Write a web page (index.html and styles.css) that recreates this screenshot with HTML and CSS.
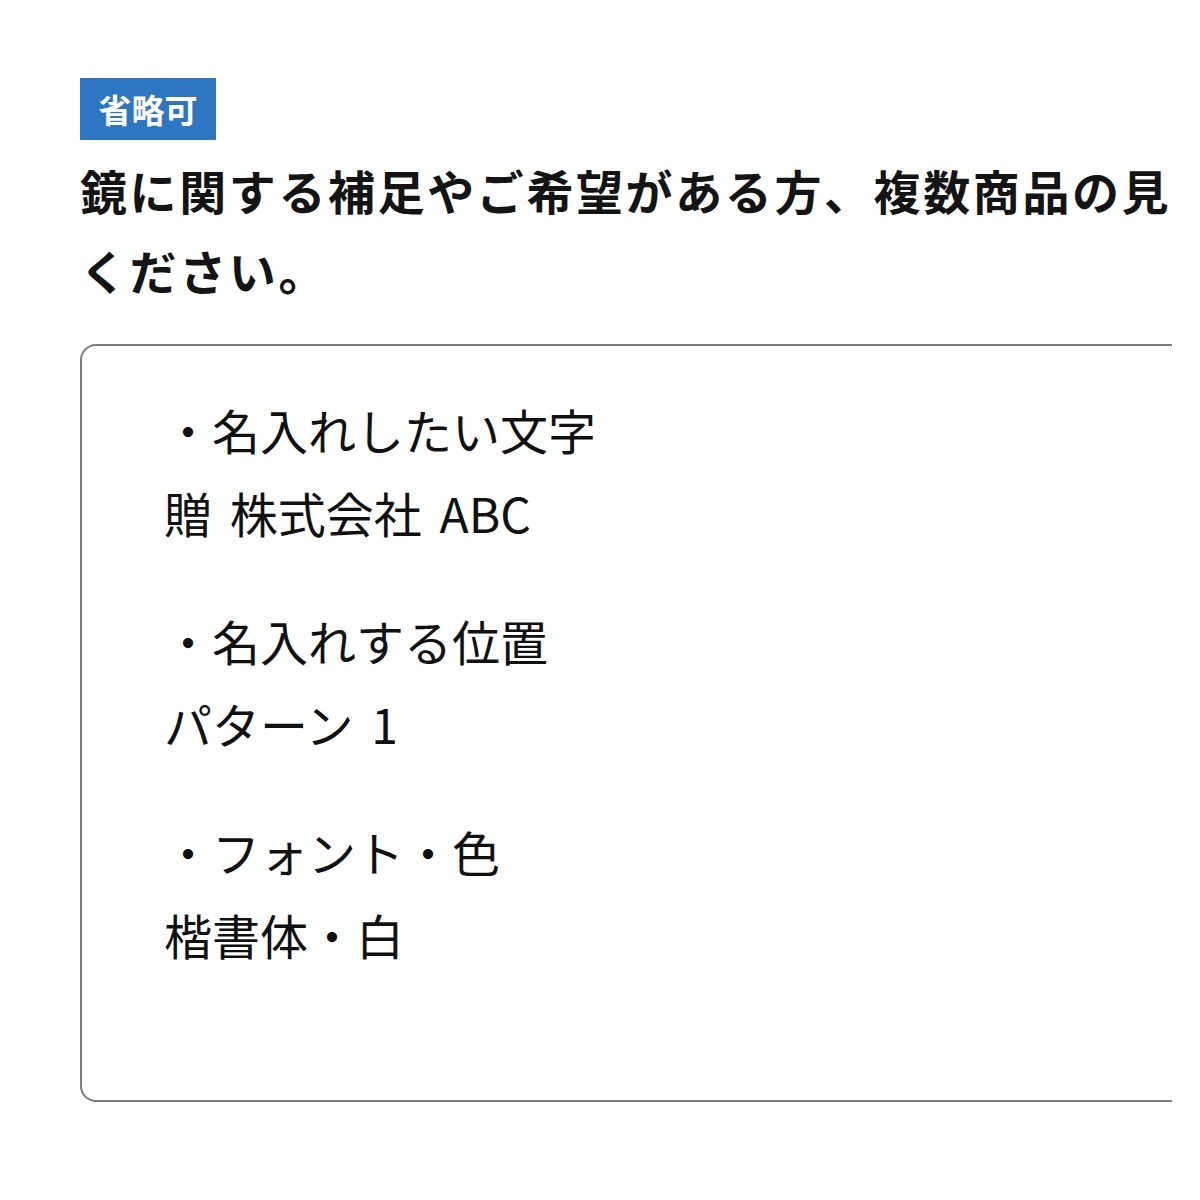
FILE: index.html
```html
<!DOCTYPE html>
<html lang="ja">
<head>
<meta charset="utf-8">
<link rel="stylesheet" href="styles.css">
</head>
<body>
<div class="page">
  <div class="clip">
    <span class="badge">省略可</span>
    <p class="label">鏡に関する補足やご希望がある方、複数商品の見積もりをご希望の方はご記入<br>ください。</p>
    <div class="field">
      <div class="para">
        <div class="line">・名入れしたい文字</div>
        <div class="line">贈 株式会社 ABC</div>
      </div>
      <div class="para">
        <div class="line">・名入れする位置</div>
        <div class="line">パターン 1</div>
      </div>
      <div class="para">
        <div class="line">・フォント・色</div>
        <div class="line">楷書体・白</div>
      </div>
    </div>
  </div>
</div>
</body>
</html>
```
FILE: styles.css
```css
html, body {
  margin: 0;
  padding: 0;
  background: #ffffff;
}
.page {
  padding: 78px 0 0 80px;
  font-family: "Noto Sans CJK JP", "Noto Sans", sans-serif;
  color: #111111;
}
.clip {
  width: 1092px;
  overflow: hidden;
}
.badge {
  display: inline-flex;
  align-items: center;
  justify-content: center;
  width: 136px;
  height: 62px;
  background: #2f76c2;
  color: #ffffff;
  font-weight: 700;
  font-size: 33px;
  line-height: 1;
  letter-spacing: 0;
}
.label {
  margin: 10px 0 0 0;
  width: 2000px;
  font-size: 47px;
  font-weight: 700;
  line-height: 80px;
  letter-spacing: 2.6px;
  color: #141414;
}
.field {
  margin-top: 34px;
  width: 1400px;
  height: 758px;
  box-sizing: border-box;
  border: 2px solid #7d7d7d;
  border-radius: 16px;
  padding: 42px 0 0 82px;
  font-size: 48px;
  line-height: 83px;
  word-spacing: 7px;
  color: #111111;
}
.para + .para {
  margin-top: 45px;
}
.line {
  white-space: nowrap;
}
```
